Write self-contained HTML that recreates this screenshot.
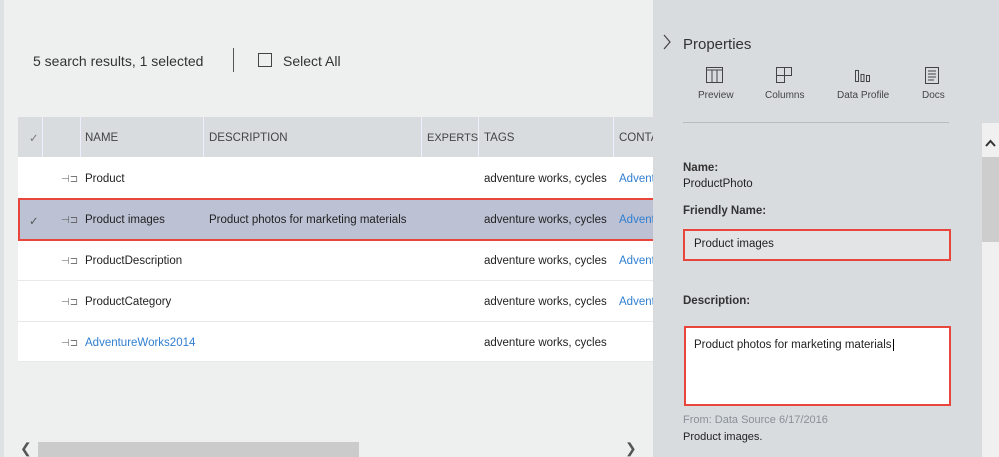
<!DOCTYPE html>
<html><head><meta charset="utf-8"><style>
*{margin:0;padding:0;box-sizing:border-box}
body{width:999px;height:457px;overflow:hidden;background:#eef0ef;font-family:"Liberation Sans",sans-serif;color:#222;position:relative}
.a{position:absolute;white-space:nowrap}
.t{font-size:11.5px}
.hd{color:#444;font-size:11.5px}
.lk{color:#2f7fd0}
.p{font-size:10px;color:#777}
</style></head><body>
<div class="a" style="left:0;top:0;width:4px;height:457px;background:#dfe2e3"></div>
<div class="a" style="left:33px;top:53px;font-size:14px;color:#333">5 search results, 1 selected</div>
<div class="a" style="left:233px;top:48px;width:1px;height:24px;background:#555"></div>
<div class="a" style="left:258px;top:53px;width:14px;height:14px;border:1px solid #444"></div>
<div class="a" style="left:283px;top:53px;font-size:14px;color:#333">Select All</div>

<div class="a" style="left:18px;top:117px;width:635px;height:245px;background:#fff;overflow:hidden">
 <div class="a" style="left:0;top:0;width:635px;height:40px;background:#d8dcdf"></div>
 <div class="a" style="left:24px;top:0;width:1px;height:40px;background:#eef"></div>
 <div class="a" style="left:62px;top:0;width:1px;height:40px;background:#eef"></div>
 <div class="a" style="left:185px;top:0;width:1px;height:40px;background:#eef"></div>
 <div class="a" style="left:403px;top:0;width:1px;height:40px;background:#eef"></div>
 <div class="a" style="left:460px;top:0;width:1px;height:40px;background:#eef"></div>
 <div class="a" style="left:595px;top:0;width:1px;height:40px;background:#eef"></div>
 <div class="a hd" style="left:11px;top:14px;color:#777">✓</div>
 <div class="a hd" style="left:67px;top:15px">NAME</div>
 <div class="a hd" style="left:191px;top:15px">DESCRIPTION</div>
 <div class="a hd" style="left:409px;top:15px;font-size:11px">EXPERTS</div>
 <div class="a hd" style="left:466px;top:15px">TAGS</div>
 <div class="a hd" style="left:601px;top:15px">CONTACT</div>

 <div class="a" style="left:0;top:81px;width:635px;height:42px;background:#bcc1d4"></div>
 <div class="a" style="left:0;top:122px;width:635px;height:1px;background:#e6e8ea"></div>
 <div class="a" style="left:0;top:163px;width:635px;height:1px;background:#e6e8ea"></div>
 <div class="a" style="left:0;top:204px;width:635px;height:1px;background:#e6e8ea"></div>
 <div class="a" style="left:0;top:244px;width:635px;height:1px;background:#e6e8ea"></div>

 <div class="a t" style="left:11px;top:97px;color:#555">✓</div>

 <div class="a p" style="left:43px;top:57px">⊣⊐</div>
 <div class="a t" style="left:67px;top:56px">Product</div>
 <div class="a t" style="left:466px;top:56px">adventure works, cycles</div>
 <div class="a t lk" style="left:601px;top:56px">Adventure</div>

 <div class="a p" style="left:43px;top:98px;color:#666">⊣⊐</div>
 <div class="a t" style="left:67px;top:97px">Product images</div>
 <div class="a t" style="left:191px;top:97px">Product photos for marketing materials</div>
 <div class="a t" style="left:466px;top:97px">adventure works, cycles</div>
 <div class="a t lk" style="left:601px;top:97px">Adventure</div>

 <div class="a p" style="left:43px;top:139px">⊣⊐</div>
 <div class="a t" style="left:67px;top:138px">ProductDescription</div>
 <div class="a t" style="left:466px;top:138px">adventure works, cycles</div>
 <div class="a t lk" style="left:601px;top:138px">Adventure</div>

 <div class="a p" style="left:43px;top:180px">⊣⊐</div>
 <div class="a t" style="left:67px;top:179px">ProductCategory</div>
 <div class="a t" style="left:466px;top:179px">adventure works, cycles</div>
 <div class="a t lk" style="left:601px;top:179px">Adventure</div>

 <div class="a p" style="left:43px;top:221px">⊣⊐</div>
 <div class="a t lk" style="left:67px;top:220px">AdventureWorks2014</div>
 <div class="a t" style="left:466px;top:220px">adventure works, cycles</div>
</div>
<div class="a" style="left:18px;top:198px;width:637px;height:43px;border:2px solid #e8453c"></div>

<div class="a" style="left:20px;top:440px;font-size:14px;color:#555">❮</div>
<div class="a" style="left:38px;top:442px;width:321px;height:15px;background:#cbcbcb"></div>
<div class="a" style="left:625px;top:440px;font-size:14px;color:#555">❯</div>

<div class="a" style="left:653px;top:0;width:346px;height:457px;background:#d8dcdf"></div>
<svg class="a" style="left:662px;top:34px" width="10" height="16" viewBox="0 0 10 16" fill="none" stroke="#444" stroke-width="1.2"><path d="M2 1L8 8L2 15"/></svg>
<div class="a" style="left:683px;top:36px;font-size:15px;color:#333">Properties</div>
<svg class="a" style="left:706px;top:67px" width="18" height="16" viewBox="0 0 18 16" fill="none" stroke="#444"><rect x="0.5" y="0.5" width="16" height="15"/><line x1="0.5" y1="3" x2="16.5" y2="3"/><line x1="6" y1="3" x2="6" y2="15.5"/><line x1="11" y1="3" x2="11" y2="15.5"/></svg>
<svg class="a" style="left:776px;top:67px" width="18" height="16" viewBox="0 0 18 16" fill="none" stroke="#444"><path d="M0.5 0.5H15.5V8.5H8.5V15.5H0.5Z M8.5 0.5V8.5 M0.5 8.5H8.5"/></svg>
<svg class="a" style="left:855px;top:70px" width="16" height="12" viewBox="0 0 16 12" fill="none" stroke="#444"><rect x="0.5" y="0.5" width="3" height="11"/><rect x="6" y="4.5" width="3" height="7"/><rect x="11.5" y="5.5" width="3" height="6"/></svg>
<svg class="a" style="left:925px;top:67px" width="14" height="17" viewBox="0 0 14 17" fill="none" stroke="#444"><rect x="0.5" y="0.5" width="13" height="16"/><path d="M3 4H11M3 7H11M3 10H11M3 13H9"/></svg>
<div class="a" style="left:698px;top:90px;font-size:10px;color:#444">Preview</div>
<div class="a" style="left:765px;top:90px;font-size:10px;color:#444">Columns</div>
<div class="a" style="left:837px;top:90px;font-size:10px;color:#444">Data Profile</div>
<div class="a" style="left:922px;top:90px;font-size:10px;color:#444">Docs</div>
<div class="a" style="left:683px;top:122px;width:266px;height:1px;background:#b8bcbf"></div>

<div class="a" style="left:982px;top:123px;width:17px;height:334px;background:#f0f0f0"></div>
<svg class="a" style="left:985px;top:139px" width="11" height="8" viewBox="0 0 11 8" fill="none" stroke="#333" stroke-width="2"><path d="M1 7L5.5 2L10 7"/></svg>
<div class="a" style="left:982px;top:157px;width:17px;height:85px;background:#cdcdcd"></div>

<div class="a" style="left:683px;top:162px;font-size:11.5px;font-weight:bold;color:#333">Name:</div>
<div class="a" style="left:683px;top:178px;font-size:11.5px;color:#222">ProductPhoto</div>
<div class="a" style="left:683px;top:205px;font-size:11.5px;font-weight:bold;color:#333">Friendly Name:</div>
<div class="a" style="left:683px;top:229px;width:268px;height:32px;background:#e2e4e6;border:2px solid #e8453c"></div>
<div class="a" style="left:694px;top:238px;font-size:11.5px">Product images</div>
<div class="a" style="left:683px;top:295px;font-size:11.5px;font-weight:bold;color:#333">Description:</div>
<div class="a" style="left:684px;top:326px;width:267px;height:80px;background:#fff;border:2px solid #e8453c"></div>
<div class="a" style="left:694px;top:339px;font-size:11.5px">Product photos for marketing materials<span style="border-left:1px solid #000;margin-left:1px"></span></div>
<div class="a" style="left:683px;top:414px;font-size:11px;color:#8a9099">From: Data Source 6/17/2016</div>
<div class="a" style="left:683px;top:431px;font-size:11px;color:#222">Product images.</div>
</body></html>
